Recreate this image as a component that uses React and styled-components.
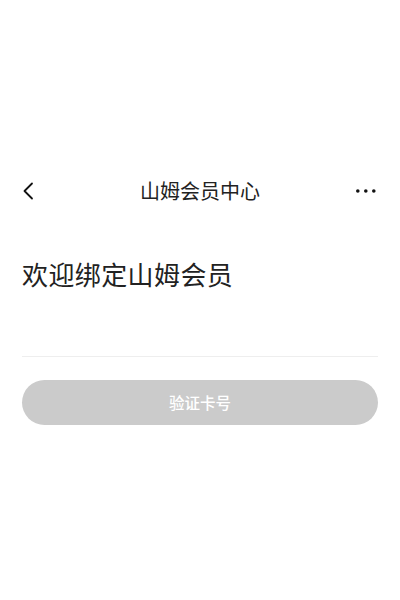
import React from "react";
import styled, { createGlobalStyle } from "styled-components";

const Global = createGlobalStyle`
  html, body { margin: 0; padding: 0; background: #fff; }
  body { font-family: "Noto Sans CJK SC", "Noto Sans", sans-serif; }
  * { box-sizing: border-box; }
`;

const Page = styled.div`
  width: 400px;
  min-height: 600px;
  padding-top: 169px;
  background: #fff;
`;

const NavBar = styled.div`
  height: 44px;
  display: flex;
  align-items: center;
  justify-content: space-between;
  padding: 0 24px 0 22px;
  position: relative;
`;

const NavButton = styled.button`
  border: 0;
  background: none;
  padding: 0;
  width: 24px;
  height: 24px;
  display: flex;
  align-items: center;
  justify-content: ${(p) => (p.$right ? "flex-end" : "flex-start")};
  color: #111;
`;

const Title = styled.div`
  position: absolute;
  left: 0;
  right: 0;
  text-align: center;
  font-size: 20px;
  line-height: 44px;
  color: #222;
  pointer-events: none;
`;

const Content = styled.div`
  padding: 0 22px;
`;

const Heading = styled.h1`
  margin: 43px 0 0;
  font-size: 26px;
  line-height: 36px;
  font-weight: 400;
  color: #222;
  letter-spacing: 0.4px;
`;

const Field = styled.input`
  display: block;
  width: 100%;
  margin-top: 16px;
  height: 49px;
  border: 0;
  border-bottom: 1px solid #eeeeee;
  outline: none;
  font-size: 16px;
  font-family: inherit;
  background: transparent;
`;

const SubmitButton = styled.button`
  display: block;
  width: 100%;
  margin-top: 23px;
  height: 45px;
  border: 0;
  border-radius: 23px;
  background: #cbcbcb;
  color: #fff;
  font-family: inherit;
  font-size: 15.5px;
  font-weight: 500;
  line-height: 43px;
`;

export default function App() {
  return (
    <Page>
      <Global />
      <NavBar>
        <NavButton aria-label="返回">
          <svg width="12" height="18" viewBox="0 0 12 18">
            <path d="M10 1.5 L2.5 9 L10 16.5" fill="none" stroke="#111" strokeWidth="1.8" strokeLinecap="round" strokeLinejoin="round" />
          </svg>
        </NavButton>
        <Title>山姆会员中心</Title>
        <NavButton $right aria-label="更多">
          <svg width="20" height="4" viewBox="0 0 20 4">
            <circle cx="1.8" cy="2" r="1.8" fill="#111" />
            <circle cx="9.8" cy="2" r="1.8" fill="#111" />
            <circle cx="17.8" cy="2" r="1.8" fill="#111" />
          </svg>
        </NavButton>
      </NavBar>
      <Content>
        <Heading>欢迎绑定山姆会员</Heading>
        <Field type="text" aria-label="会员卡号" />
        <SubmitButton disabled>验证卡号</SubmitButton>
      </Content>
    </Page>
  );
}
